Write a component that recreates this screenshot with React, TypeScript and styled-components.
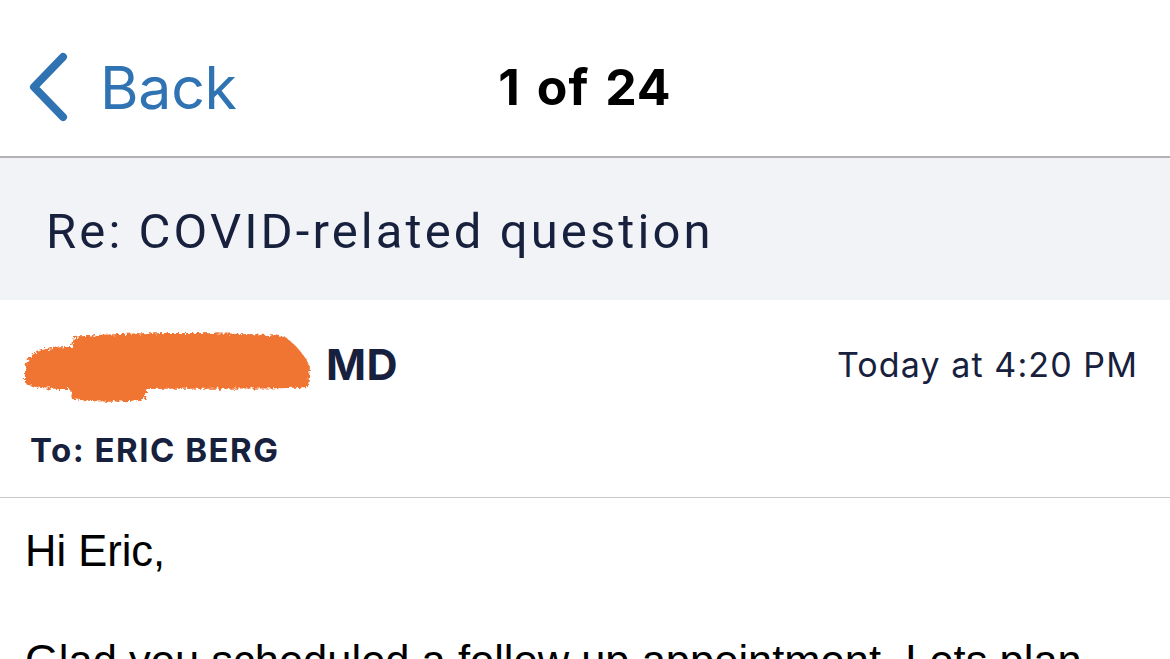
import styled, { createGlobalStyle } from 'styled-components';

const GlobalStyle = createGlobalStyle`
  html, body {
    margin: 0;
    padding: 0;
    background: #fff;
    overflow: hidden;
  }
  * {
    box-sizing: border-box;
  }
`;

export default function App() {
  return (
    <Screen>
      <GlobalStyle />
      <NavBar>
        <BackButton>
          <svg width="46" height="72" viewBox="0 0 46 72">
            <path
              d="M37 6 L8 36 L37 66"
              fill="none"
              stroke="#2f73b3"
              strokeWidth="8"
              strokeLinecap="round"
              strokeLinejoin="round"
            />
          </svg>
          <BackLabel>Back</BackLabel>
        </BackButton>
        <Counter>1 of 24</Counter>
        <span />
      </NavBar>
      <SubjectBar>
        <Subject>Re: COVID-related question</Subject>
      </SubjectBar>
      <Meta>
        <SenderRow>
          <Sender>
            <Redaction viewBox="0 0 292 74" width="292" height="74">
              <defs>
                <filter id="rough" x="-5%" y="-10%" width="110%" height="120%">
                  <feTurbulence type="fractalNoise" baseFrequency="0.35" numOctaves="2" seed="3" />
                  <feDisplacementMap in="SourceGraphic" scale="6" />
                </filter>
              </defs>
              <path
                filter="url(#rough)"
                d="M3 42 C4 22 22 18 50 18 L52 8 C100 3 200 3 262 7 C274 16 283 26 288 38 L286 58 C240 61 180 59 126 60 L122 70 C100 74 72 73 50 70 L48 60 C32 60 12 60 3 54 Z"
                fill="#f07431"
              />
            </Redaction>
            <SenderName>MD</SenderName>
          </Sender>
          <Timestamp>Today at 4:20 PM</Timestamp>
        </SenderRow>
        <Recipient>To: ERIC BERG</Recipient>
      </Meta>
      <Body>
        <Paragraph>Hi Eric,</Paragraph>
        <Paragraph>Glad you scheduled a follow up appointment. Lets plan</Paragraph>
      </Body>
    </Screen>
  );
}

const Screen = styled.div`
  width: 1170px;
  height: 659px;
  overflow: hidden;
  background: #fff;
`;

const NavBar = styled.header`
  height: 158px;
  display: grid;
  grid-template-columns: 1fr auto 1fr;
  align-items: center;
  border-bottom: 2px solid #b1b1b6;
  padding-top: 18px;
`;

const BackButton = styled.div`
  display: flex;
  align-items: center;
  gap: 28px;
  padding-left: 26px;
`;

const BackLabel = styled.span`
  font-family: Inter, 'Liberation Sans', sans-serif;
  font-size: 59px;
  color: #2f73b3;
  letter-spacing: -0.3px;
`;

const Counter = styled.h1`
  margin: 0;
  font-family: Inter, 'Liberation Sans', sans-serif;
  font-weight: 700;
  font-size: 50px;
  color: #000;
  letter-spacing: 1px;
  word-spacing: 3px;
`;

const SubjectBar = styled.div`
  height: 142px;
  background: #f2f3f7;
  display: flex;
  align-items: center;
  padding-left: 46px;
  padding-top: 4px;
`;

const Subject = styled.h2`
  margin: 0;
  font-family: Roboto, 'Liberation Sans', sans-serif;
  font-weight: 400;
  font-size: 49px;
  color: #17213d;
  letter-spacing: 3.1px;
`;

const Meta = styled.div`
  height: 198px;
  padding: 25px 32px 0 22px;
  border-bottom: 1px solid #c9c9cc;
`;

const SenderRow = styled.div`
  display: flex;
  align-items: center;
  justify-content: space-between;
`;

const Sender = styled.div`
  display: flex;
  align-items: center;
  gap: 12px;
`;

const Redaction = styled.svg`
  display: block;
  margin-top: 4px;
`;

const SenderName = styled.span`
  font-family: Inter, 'Liberation Sans', sans-serif;
  font-weight: 700;
  font-size: 43px;
  color: #17213d;
  letter-spacing: 0.5px;
`;

const Timestamp = styled.span`
  font-family: Inter, 'Liberation Sans', sans-serif;
  font-size: 34px;
  color: #17213d;
  letter-spacing: 1.1px;
`;

const Recipient = styled.div`
  margin-top: 27px;
  padding-left: 8px;
  font-family: Inter, 'Liberation Sans', sans-serif;
  font-weight: 700;
  font-size: 33px;
  color: #17213d;
  letter-spacing: 1.5px;
`;

const Body = styled.div`
  padding: 26px 25px 0;
  font-family: 'Liberation Sans', Arial, sans-serif;
  font-size: 43.5px;
  line-height: 55px;
  color: #000;
`;

const Paragraph = styled.p`
  margin: 0 0 55px;
  white-space: nowrap;
`;
